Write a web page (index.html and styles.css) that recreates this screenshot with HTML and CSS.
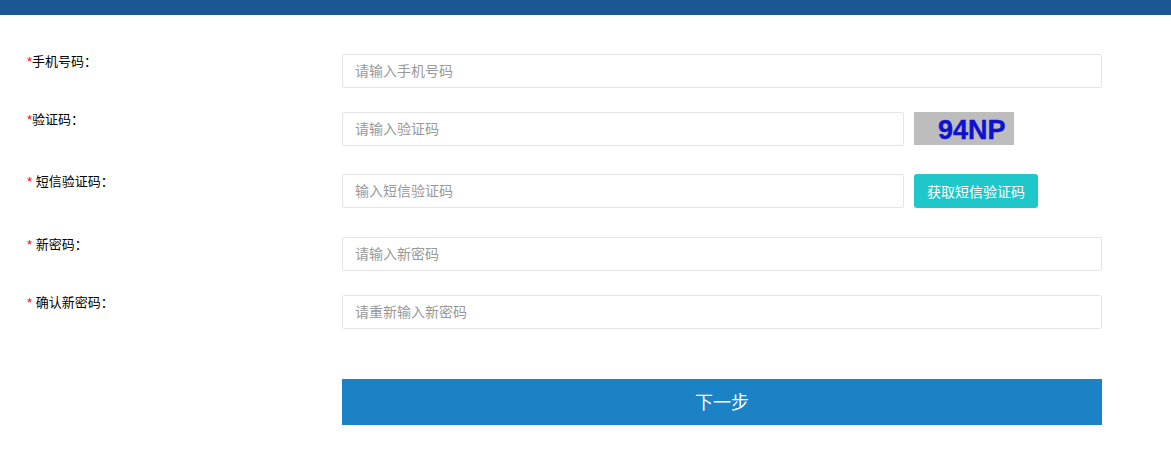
FILE: index.html
```html
<!DOCTYPE html>
<html>

<head>
    <meta charset="utf-8">
    <title>找回密码</title>
    <link rel="stylesheet" href="styles.css">
</head>

<body>

    <div class="topbar"></div>

    <form class="form">

        <div class="row row-first">
            <label class="label"><span class="star">*</span>手机号码：</label>
            <input class="input" type="text" placeholder="请输入手机号码">
        </div>

        <div class="row row-code">
            <label class="label"><span class="star">*</span>验证码：</label>
            <input class="input input-short" type="text" placeholder="请输入验证码">
            <div class="captcha">94NP</div>
        </div>

        <div class="row row-sms">
            <label class="label"><span class="star">*</span> 短信验证码：</label>
            <input class="input input-short" type="text" placeholder="输入短信验证码">
            <button class="btn-sms" type="button">获取短信验证码</button>
        </div>

        <div class="row">
            <label class="label"><span class="star">*</span> 新密码：</label>
            <input class="input" type="password" placeholder="请输入新密码">
        </div>

        <div class="row">
            <label class="label"><span class="star">*</span> 确认新密码：</label>
            <input class="input" type="password" placeholder="请重新输入新密码">
        </div>

        <div class="row row-submit">
            <button class="btn-next" type="button">下一步</button>
        </div>

    </form>

</body>

</html>
```

FILE: styles.css
```css
* {
    box-sizing: border-box;
}

body {
    margin: 0;
    background-color: #fff;
    color: #000;
    font-family: "Liberation Sans", "Noto Sans CJK SC", sans-serif;
    font-size: 14px;
}

.topbar {
    height: 15px;
    background-color: #1a5693;
}

.form {
    padding: 39px 0 0 27px;
}

.row {
    display: flex;
    align-items: flex-start;
    margin-bottom: 24px;
}

.row-code {
    margin-bottom: 28px;
}

.row-sms {
    margin-bottom: 29px;
}

.row-submit {
    margin: 50px 0 0 315px;
}

.label {
    width: 315px;
    flex-shrink: 0;
    font-size: 13px;
    line-height: 16px;
}

.star {
    color: #f00;
}

.input {
    width: 760px;
    height: 34px;
    padding: 0 12px;
    border: 1px solid #e5e5e5;
    border-radius: 2px;
    outline: none;
    font-family: inherit;
    font-size: 14px;
    color: #333;
}

.input::placeholder {
    color: #999;
    opacity: 1;
}

.input-short {
    width: 562px;
}

.captcha {
    width: 100px;
    height: 33px;
    margin-left: 10px;
    padding-left: 24px;
    background-color: #bdbdbd;
    color: #1010d0;
    font-family: "Liberation Sans", sans-serif;
    font-size: 27px;
    font-weight: bold;
    line-height: 37px;
    -webkit-text-stroke: 0.4px #1010d0;
}

.btn-sms {
    width: 124px;
    height: 34px;
    margin-left: 10px;
    padding: 0;
    border: none;
    border-radius: 3px;
    background-color: #20c7ca;
    color: #fff;
    font-family: inherit;
    font-size: 14px;
}

.btn-next {
    width: 760px;
    height: 46px;
    padding: 0 0 2px;
    border: none;
    background-color: #1c82c6;
    color: #fff;
    font-family: inherit;
    font-size: 18px;
}
```
